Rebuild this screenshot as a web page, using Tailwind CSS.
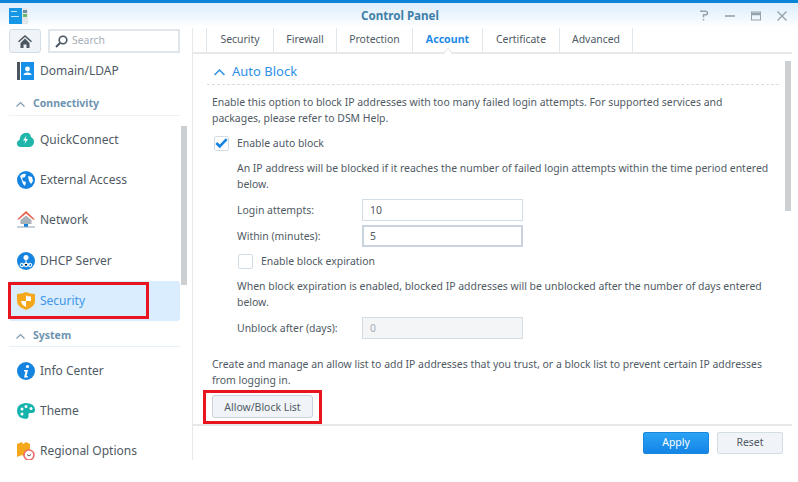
<!DOCTYPE html>
<html>
  <head>
    <title>Control Panel</title>
    <script src="https://cdn.jsdelivr.net/npm/@tailwindcss/browser@4"></script>
  </head>
  <body class="w-[798px] h-[482px] overflow-hidden bg-white font-['Noto_Sans',sans-serif] text-[10.44px] text-[#505a64] relative">
    <!-- title bar -->
    <div class="h-[28px] border-t-[3px] border-[#0a84d8] bg-gradient-to-b from-[#dcedfb] to-white flex items-center pl-[9px] pr-[11px]">
      <svg width="20" height="16" viewBox="0 0 20 16">
        <rect width="13" height="16" fill="#1697e6" />
        <rect x="2" y="3" width="6" height="1" fill="#bfe6fb" />
        <rect x="2" y="8" width="8" height="1" fill="#bfe6fb" />
        <rect x="13" width="6" height="16" fill="#e3e7ea" />
        <rect x="14" y="2" width="4" height="3" fill="#6d8f9e" />
        <rect x="14" y="6" width="4" height="3" fill="#67b96b" />
      </svg>
      <div class="flex-1 text-center text-[11.6px] font-bold text-[#3f7fa8] pl-[72px] pt-px">Control Panel</div>
      <div class="flex items-center gap-[16px]">
        <svg width="10" height="11" viewBox="0 0 10 11" fill="none" stroke="#97a3ac" stroke-width="1.5"><path d="M1 1.200h5.500q2 0 2 1.800t-2 1.800H4.500V7.500M4.500 9v1.500" /></svg>
        <svg width="10" height="10" viewBox="0 0 10 10" stroke="#97a3ac" stroke-width="1.600"><path d="M0 5h10" /></svg>
        <svg width="10" height="10" viewBox="0 0 10 10" fill="none" stroke="#97a3ac"><rect x=".5" y="1" width="9" height="8" /><path d="M0 3h10" stroke-width="2.500" /></svg>
        <svg width="10" height="10" viewBox="0 0 10 10" stroke="#97a3ac" stroke-width="1.400"><path d="M.5.500l9 9M9.500.500l-9 9" /></svg>
      </div>
    </div>

    <div class="flex h-[432px]">
      <!-- sidebar -->
      <aside class="w-[193px] shrink-0 border-r border-[#e6e9ec] relative overflow-hidden pl-[9px] pr-[12px]">
        <div class="flex gap-[7px] h-[24px] mt-px">
          <button class="w-[32px] rounded-[3px] border border-[#d3dde6] bg-[#f0f4f8] flex items-center justify-center">
            <svg width="14" height="13" viewBox="0 0 14 13" fill="#4a5560"><path d="M7 0L0 6.200l1 1L7 2l6 5.200 1-1zM2.500 8v5h3V9.500h3V13h3V8L7 3.600z" /></svg>
          </button>
          <div class="w-[132px] border-2 border-[#dfe6ec] flex items-center pl-[5px] gap-[4px] text-[#a6aeb6]">
            <svg width="13" height="13" viewBox="0 0 13 13" fill="none" stroke="#4a5560" stroke-width="1.600"><circle cx="8" cy="5" r="3.800" /><path d="M5 8L1 12" stroke-width="2" /></svg>
            Search
          </div>
        </div>

        <div class="flex items-center h-[36px] pl-[8px] gap-[6px] text-[12px]">
          <svg class="shrink-0" width="17" height="18" viewBox="0 0 17 18"><rect width="17" height="18" fill="#1690e8" /><rect width="3" height="18" fill="#4a5560" /><rect x="3" width="1" height="18" fill="#fff" /><circle cx="10.500" cy="7" r="2.400" fill="#fff" /><path d="M6.500 13q0-2.500 4-2.500t4 2.500z" fill="#fff" /></svg>
          Domain/LDAP
        </div>

        <div class="mt-[4px] h-[23px] border-b border-[#eef2f5] flex items-center pl-[7px] gap-[8px] font-bold text-[10.5px] text-[#6d94b0]">
          <svg width="9" height="6" viewBox="0 0 9 6" fill="none" stroke="#7f9bb0" stroke-width="1.200"><path d="M.5 5.500l4-4 4 4" /></svg>
          Connectivity
        </div>

        <div class="flex items-center h-[41px] pl-[8px] gap-[6px] text-[12px] mt-[3px]">
          <svg class="shrink-0" width="17" height="15" viewBox="0 0 17 15"><path d="M4 15q-4 0-4-3.500 0-3 2.500-3.500Q3 2 8 1q5-1 6 4 3 1.500 3 5t-4 5z" fill="#1fb5a8" /><path d="M9.500 3.500L6 8.500h2.500L7.500 12 11 7H8.500z" fill="#fff" /></svg>
          QuickConnect
        </div>
        <div class="flex items-center h-[40px] pl-[8px] gap-[5px] text-[12px]">
          <svg class="shrink-0" width="18" height="18" viewBox="0 0 18 18"><circle cx="9" cy="9" r="9" fill="#1583e0" /><path d="M3 5q3-3 6-2L8 6 5 7l1 3 3 1-1 4-2-2-1-3zM11 5l4 1 1 4-2 3-2-3z" fill="#fff" /></svg>
          External Access
        </div>
        <div class="flex items-center h-[40px] pl-[8px] gap-[5px] text-[12px]">
          <svg class="shrink-0" width="18" height="18" viewBox="0 0 18 18"><path d="M9 0L0 8.500h2L9 2.500l7 6h2z" fill="#e8604c" /><path d="M3.500 9L9 4.500 14.500 9v4h-11z" fill="#a9b2b8" /><rect x="7" y="13" width="4" height="3" fill="#1583e0" /><path d="M0 16h18" stroke="#8ba4b6" /></svg>
          Network
        </div>
        <div class="flex items-center h-[41px] pl-[8px] gap-[5px] text-[12px]">
          <svg class="shrink-0" width="18" height="18" viewBox="0 0 18 18"><circle cx="9" cy="9" r="9" fill="#1583e0" /><circle cx="9" cy="5.500" r="2.500" fill="#fff" /><path d="M9 8v3M5 13l4-2 4 2" stroke="#fff" /><circle cx="5" cy="13" r="1.800" fill="none" stroke="#fff" /><circle cx="9" cy="13" r="1.800" fill="none" stroke="#fff" /><circle cx="13" cy="13" r="1.800" fill="none" stroke="#fff" /></svg>
          DHCP Server
        </div>
        <div class="flex items-center h-[40px] pl-[8px] gap-[5px] text-[12px] rounded-[3px] bg-[#d9edff] text-[#3f96e8] w-[171px]">
          <svg class="shrink-0" width="18" height="18" viewBox="0 0 18 18"><path d="M0 2q5 0 9-2 4 2 9 2v7q0 6-9 9-9-3-9-9z" fill="#f5a81c" /><path d="M9 3.500q2.500 1 5 1V9H9zM9 9v6q-4-1.500-5-6z" fill="#fff" /></svg>
          Security
        </div>

        <div class="h-[26px] pt-[5px] border-b border-[#e6f0f8] flex items-center pl-[7px] gap-[8px] font-bold text-[10.5px] text-[#6d94b0]">
          <svg width="9" height="6" viewBox="0 0 9 6" fill="none" stroke="#7f9bb0" stroke-width="1.200"><path d="M.5 5.500l4-4 4 4" /></svg>
          System
        </div>

        <div class="flex items-center h-[40px] pl-[8px] gap-[5px] text-[12px] mt-[4px]">
          <svg class="shrink-0" width="18" height="18" viewBox="0 0 18 18"><circle cx="9" cy="9" r="9" fill="#1583e0" /><circle cx="10.500" cy="4.500" r="1.600" fill="#fff" /><path d="M7 8h4l-1.500 6H11l-.5 1.500H7L8.500 9.500H7z" fill="#fff" /></svg>
          Info Center
        </div>
        <div class="flex items-center h-[40px] pl-[8px] gap-[5px] text-[12px]">
          <svg class="shrink-0" width="18" height="16" viewBox="0 0 18 16"><path d="M8 0q10 0 10 7 0 3-3 3h-2q-2 0-1.500 2.500T9 16Q0 15 0 8t8-8z" fill="#14b4ac" /><circle cx="5" cy="6" r="1.500" fill="#fff" /><circle cx="9" cy="3.500" r="1.500" fill="#fff" /><circle cx="14" cy="5.500" r="1.500" fill="#fff" /><circle cx="5" cy="11" r="1.500" fill="#fff" /></svg>
          Theme
        </div>
        <div class="flex items-center h-[40px] pl-[8px] gap-[5px] text-[12px]">
          <svg class="shrink-0" width="18" height="18" viewBox="0 0 18 18"><path d="M0 2l5-2 1 2 3-2 4 2v9l-5 4-3-2-5 2z" fill="#f5a81c" /><circle cx="12" cy="13" r="5" fill="#fff" stroke="#ef6a6a" stroke-width="1.600" /><path d="M10 12.500l2 1.500 2-1.500" fill="none" stroke="#555" /></svg>
          Regional Options
        </div>

        <div class="absolute left-[181px] top-[98px] w-[6px] h-[159px] bg-[#cdd0d2]"></div>
      </aside>

      <!-- main -->
      <main class="flex-1 flex flex-col min-w-0 pr-[6px] relative">
        <div class="h-[26px] shrink-0 border-b-2 border-[#e6e8ea] pl-[13px] flex">
          <div class="flex items-stretch h-[24px]">
            <div class="w-[68px] flex items-center justify-center border-x border-[#dfe6ec]">Security</div>
            <div class="w-[63px] flex items-center justify-center border-r border-[#dfe6ec]">Firewall</div>
            <div class="w-[76px] flex items-center justify-center border-r border-[#dfe6ec]">Protection</div>
            <div class="w-[70px] flex items-center justify-center border-r border-[#dfe6ec] font-bold text-[10.6px] text-[#1d8ae6] relative">
              Account
              <span class="absolute left-1/2 -ml-[3px] top-[21px] w-[6px] h-[6px] rotate-45 bg-white border-l border-t border-[#e6e8ea]"></span>
            </div>
            <div class="w-[77px] flex items-center justify-center border-r border-[#dfe6ec]">Certificate</div>
            <div class="w-[73px] flex items-center justify-center border-r border-[#dfe6ec]">Advanced</div>
          </div>
        </div>

        <div class="h-[370px] shrink-0 pl-[14px] pr-[13px] relative">
          <div class="h-[31px] pt-[6px] pl-[7px] border-b border-dashed border-[#d8dde1] flex items-center gap-[7px] text-[13px] text-[#2e8fe6]">
            <svg width="11" height="7" viewBox="0 0 11 7" fill="none" stroke="#2e8fe6" stroke-width="1.500"><path d="M.5 6l5-5 5 5" /></svg>
            Auto Block
          </div>
          <div class="pl-[5px] pr-[10px] leading-[16px]">
            <p class="mt-[9px]">Enable this option to block IP addresses with too many failed login attempts. For supported services and packages, please refer to DSM Help.</p>
            <label class="flex items-center h-[22px] mt-[6px] gap-[8px] pl-[2px]">
              <span class="w-[15px] h-[15px] rounded-[2px] border border-[#d3dde6] flex items-center justify-center">
                <svg width="15" height="12" viewBox="0 0 15 12" fill="none" stroke="#1584e0" stroke-width="3"><path d="M1.500 6l4 4 8-8.500" /></svg>
              </span>
              Enable auto block
            </label>
            <div class="pl-[25px]">
              <p class="mt-[6px]">An IP address will be blocked if it reaches the number of failed login attempts within the time period entered below.</p>
              <div class="flex items-center h-[22px] mt-[7px]">
                <span class="w-[125px]">Login attempts:</span>
                <div class="w-[161px] h-[22px] border border-[#d3dde6] flex items-center pl-[7px]">10</div>
              </div>
              <div class="flex items-center h-[22px] mt-[4px]">
                <span class="w-[125px]">Within (minutes):</span>
                <div class="w-[161px] h-[22px] border-2 border-[#c9d3dd] flex items-center pl-[6px]">5</div>
              </div>
              <label class="flex items-center h-[20px] mt-[4px] gap-[8px] pl-[1px]">
                <span class="w-[15px] h-[15px] rounded-[2px] border border-[#d3dde6]"></span>
                Enable block expiration
              </label>
              <p class="mt-[7px]">When block expiration is enabled, blocked IP addresses will be unblocked after the number of days entered below.</p>
              <div class="flex items-center h-[22px] mt-[7px]">
                <span class="w-[125px]">Unblock after (days):</span>
                <div class="w-[161px] h-[22px] border border-[#d3dde6] bg-[#f3f5f7] text-[#a6aeb6] flex items-center pl-[7px]">0</div>
              </div>
            </div>
            <p class="mt-[17px]">Create and manage an allow list to add IP addresses that you trust, or a block list to prevent certain IP addresses from logging in.</p>
            <button class="mt-[7px] w-[101px] h-[23px] rounded-[3px] border border-[#c9d3dd] bg-[#f0f4f8]">Allow/Block List</button>
          </div>
          <div class="absolute right-[1px] top-[7px] w-[6px] h-[150px] bg-[#cdd0d2]"></div>
        </div>

        <div class="h-[36px] shrink-0 border-t-2 border-[#e6e8ea] flex items-center justify-end gap-[8px] pr-[9px]">
          <button class="w-[66px] h-[22px] rounded-[2px] bg-gradient-to-b from-[#2aa3f5] to-[#1484e6] text-white border border-[#1a86dc]">Apply</button>
          <button class="w-[66px] h-[22px] rounded-[2px] border border-[#d3dde6] bg-[#f0f4f8]">Reset</button>
        </div>
      </main>
    </div>

    <!-- red annotation boxes -->
    <div class="absolute left-[8px] top-[282px] w-[141px] h-[37px] border-[3px] border-[#e8141f]"></div>
    <div class="absolute left-[203px] top-[390px] w-[119px] h-[34px] border-[3px] border-[#e8141f]"></div>
  </body>
</html>
